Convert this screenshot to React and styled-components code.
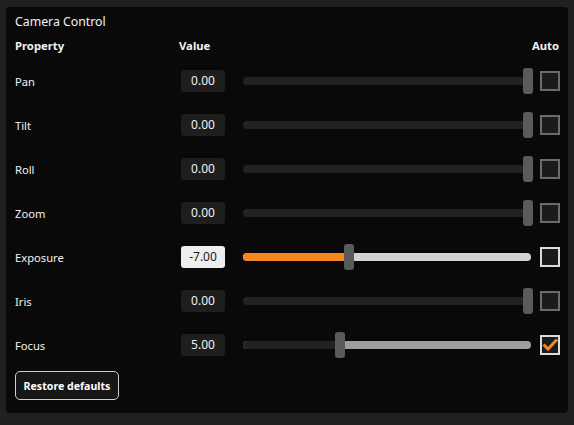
import styled, { createGlobalStyle } from "styled-components";

const GlobalStyle = createGlobalStyle`
  html, body {
    margin: 0;
    background: #202020;
    font-family: "Noto Sans", "Open Sans", sans-serif;
    color: #f2f2f2;
  }
`;

// Camera properties, thumb offset is in px from the left of the track
const properties = [
  { name: "Pan", value: "0.00", thumb: 280 },
  { name: "Tilt", value: "0.00", thumb: 280 },
  { name: "Roll", value: "0.00", thumb: 280 },
  { name: "Zoom", value: "0.00", thumb: 280 },
  { name: "Exposure", value: "-7.00", thumb: 101, mode: "active" },
  { name: "Iris", value: "0.00", thumb: 280 },
  { name: "Focus", value: "5.00", thumb: 92, mode: "auto", checked: true },
];

const App = () => {
  return (
    <>
      <GlobalStyle />
      <Panel>
        <Title>Camera Control</Title>
        <Header>
          <span>Property</span>
          <span>Value</span>
          <span>Auto</span>
        </Header>
        <Rows>
          {properties.map((p) => (
            <Row key={p.name}>
              <Label>{p.name}</Label>
              <ValueBox $light={p.mode === "active"}>{p.value}</ValueBox>
              <Slider>
                <Track $mode={p.mode}>
                  {p.mode && <Fill $mode={p.mode} style={{ width: p.thumb }} />}
                </Track>
                <Thumb style={{ left: p.thumb }} />
              </Slider>
              <Check $on={!!p.mode}>
                {p.checked && (
                  <svg width="20" height="20" viewBox="0 0 20 20">
                    <polyline
                      points="3.5,9.5 8,14 17,4.5"
                      fill="none"
                      stroke="#f5861f"
                      strokeWidth="3"
                    />
                  </svg>
                )}
              </Check>
            </Row>
          ))}
        </Rows>
        <RestoreButton>Restore defaults</RestoreButton>
      </Panel>
    </>
  );
};

const Panel = styled.div`
  margin: 7px 0 0 6px;
  width: 562px;
  height: 406px;
  box-sizing: border-box;
  background: #0a090a;
  border-radius: 4px;
  padding: 7px 8px 0 9px;
`;

const Title = styled.div`
  font-size: 12.3px;
  line-height: 16px;
`;

const Header = styled.div`
  display: grid;
  grid-template-columns: 164px 1fr auto;
  margin-top: 8px;
  font-size: 11.3px;
  line-height: 16px;
  font-weight: 700;
  padding-right: 1px;
`;

const Rows = styled.div`
  margin-top: 5px;
  display: flex;
  flex-direction: column;
`;

const Row = styled.div`
  display: grid;
  grid-template-columns: 166px 44px 306px 29px;
  align-items: center;
  height: 44px;
`;

const Label = styled.span`
  font-size: 11.2px;
`;

const ValueBox = styled.div`
  height: 22px;
  border-radius: 3px;
  background: ${(p) => (p.$light ? "#eeeeee" : "#1e1e1e")};
  color: ${(p) => (p.$light ? "#1a1a1a" : "#f0f0f0")};
  font-size: 12px;
  line-height: 22px;
  text-align: center;
`;

const Slider = styled.div`
  position: relative;
  justify-self: end;
  width: 288px;
  height: 26px;
`;

const Track = styled.div`
  position: absolute;
  left: 0;
  right: 0;
  top: 9px;
  height: 8px;
  border-radius: 4px;
  overflow: hidden;
  background: ${(p) =>
    p.$mode === "active" ? "#d3d3d3" : p.$mode === "auto" ? "#9e9e9e" : "#222222"};
`;

const Fill = styled.div`
  height: 100%;
  background: ${(p) => (p.$mode === "active" ? "#f5861f" : "#222222")};
`;

const Thumb = styled.div`
  position: absolute;
  top: 0;
  width: 10px;
  height: 26px;
  border-radius: 3px;
  background: #5a5a5a;
`;

const Check = styled.div`
  justify-self: end;
  width: 20px;
  height: 20px;
  box-sizing: border-box;
  border: 2px solid ${(p) => (p.$on ? "#dcdcdc" : "#6b6b6b")};
  background: #1b1b1b;
  position: relative;
  svg {
    position: absolute;
    left: -2px;
    top: -2px;
  }
`;

const RestoreButton = styled.button`
  margin-top: 4px;
  width: 104px;
  height: 29px;
  border: 1px solid #d0d0d0;
  border-radius: 5px;
  background: #161616;
  color: #ffffff;
  font-family: inherit;
  font-size: 10.6px;
  font-weight: 700;
  padding: 0;
`;

export default App;
